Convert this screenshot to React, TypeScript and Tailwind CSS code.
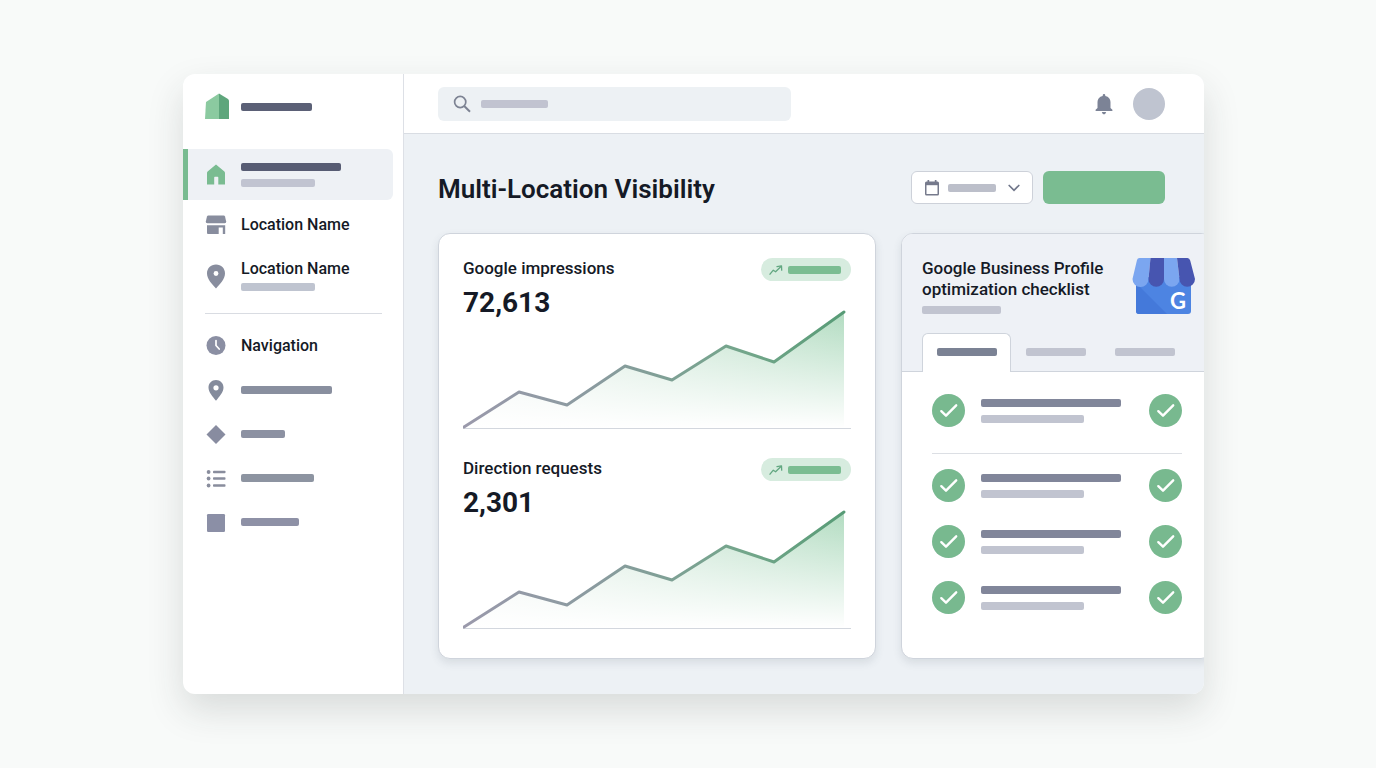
import { useState, type ReactNode } from "react";
import clsx from "clsx";

const CHART_LINE = "M1 117 L56 82 L104 95 L162 56 L209 70 L263 36 L311 52 L381 2";

function Bar({ className }: { className: string }) {
    return <span className={clsx("block h-2 rounded-[2px]", className)} />;
}

function LogoIcon() {
    return (
        <svg viewBox="0 0 24 28" className="w-6 h-7">
            <path d="M1 9 L14 0.5 V26 H0 Z" fill="#8bcaa0" />
            <path d="M14 0.5 L23 6 Q24 7 24 8 V26 H14 Z" fill="#5ea67c" />
        </svg>
    );
}

function HomeIcon() {
    return (
        <svg viewBox="0 0 24 24" className="w-6 h-6" fill="#7abc91">
            <path d="M12 1.5 L20.4 8.6 Q21 9.2 21 10 V21.5 H14.3 V14.5 Q14.3 13.8 13.6 13.8 H10.9 Q10.2 13.8 10.2 14.5 V21.5 H3 V10 Q3 9.2 3.6 8.6 Z" />
        </svg>
    );
}

function StoreIcon() {
    return (
        <svg viewBox="0 0 24 24" className="w-6 h-6" fill="#888d9e">
            <path d="M4.3 2.5 H19.7 Q20.7 2.5 21 3.5 L22.2 8.4 Q22.4 10.2 20.7 10.2 H3.3 Q1.6 10.2 1.8 8.4 L3 3.5 Q3.3 2.5 4.3 2.5 Z" />
            <path d="M3 12.3 H21.2 V21 H18.8 V14.4 H14.7 V21 H4 Q3 21 3 20 Z" />
        </svg>
    );
}

function PinLargeIcon() {
    return (
        <svg viewBox="0 0 24 28" className="w-6 h-7">
            <path d="M12 3.500 C6.800 3.500 3 7.300 3 12.500 C3 18 8 23 12 27.500 C16 23 21 18 21 12.500 C21 7.300 17.200 3.500 12 3.500 Z" fill="#888d9e" />
            <circle cx="12" cy="12.500" r="2.400" fill="#fff" />
        </svg>
    );
}

function ClockIcon() {
    return (
        <svg viewBox="0 0 24 24" className="w-6 h-6">
            <circle cx="12" cy="11.500" r="9.500" fill="#8b8fa3" />
            <path d="M12 6.500 V11.500 L15.200 15" fill="none" stroke="#fff" strokeWidth="1.700" strokeLinecap="round" />
        </svg>
    );
}

function PinIcon() {
    return (
        <svg viewBox="0 0 24 24" className="w-6 h-6">
            <path d="M12 2 C7.700 2 4.500 5.200 4.500 9.500 C4.500 14.200 8.700 18.500 12 22.800 C15.300 18.500 19.500 14.200 19.500 9.500 C19.500 5.200 16.300 2 12 2 Z" fill="#848b9c" />
            <circle cx="12" cy="9.800" r="2.600" fill="#fff" />
        </svg>
    );
}

function DiamondIcon() {
    return (
        <svg viewBox="0 0 24 24" className="w-6 h-6">
            <path d="M12 3 L21.500 12.500 L12 22 L2.500 12.500 Z" fill="#888ca0" />
        </svg>
    );
}

function ListIcon() {
    return (
        <svg viewBox="0 0 24 24" className="w-6 h-6" fill="#898d9d">
            {[6, 12.5, 19.5].map(y => (
                <g key={y}>
                    <circle cx="4.600" cy={y} r="1.900" />
                    <rect x="9" y={y - 1.3} width="12.500" height="2.600" rx="0.800" />
                </g>
            ))}
        </svg>
    );
}

function SquareIcon() {
    return (
        <svg viewBox="0 0 24 24" className="w-6 h-6">
            <rect x="3" y="4" width="18" height="18" rx="1.300" fill="#8b8fa6" />
        </svg>
    );
}

function SearchIcon() {
    return (
        <svg viewBox="0 0 18 18" className="w-[18px] h-[18px]" fill="none" stroke="#7d8393" strokeWidth="1.700">
            <circle cx="7.200" cy="7" r="5.600" />
            <path d="M11.200 11 L17 16.700" strokeWidth="2" />
        </svg>
    );
}

function BellIcon() {
    return (
        <svg viewBox="0 0 18 22" className="w-[18px] h-[22px]" fill="#7c8396">
            <path d="M9 1 Q10.300 1 10.300 2.400 V2.900 C13.800 3.600 15.500 6 15.500 9 V15 L17.400 16.800 V18 H0.600 V16.800 L2.500 15 V9 C2.500 6 4.200 3.600 7.700 2.900 V2.400 Q7.700 1 9 1 Z" />
            <path d="M6.800 19 H11.200 Q10.600 21.400 9 21.400 Q7.400 21.400 6.800 19 Z" />
        </svg>
    );
}

function CalendarIcon() {
    return (
        <svg viewBox="0 0 16 18" className="w-4 h-[18px]">
            <path d="M3.500 1 H5.200 V2.500 H10.800 V1 H12.500 V2.500 H13.500 Q15 2.500 15 4 V15 Q15 16.500 13.500 16.500 H2.500 Q1 16.500 1 15 V4 Q1 2.500 2.500 2.500 H3.500 Z" fill="#767a8c" />
            <rect x="2.500" y="6.200" width="11" height="8.800" fill="#fff" />
        </svg>
    );
}

function ChevronIcon() {
    return (
        <svg viewBox="0 0 12 8" className="w-3 h-2" fill="none" stroke="#70768a" strokeWidth="1.700" strokeLinecap="round">
            <path d="M1.200 1.500 L6 6.400 L10.800 1.500" />
        </svg>
    );
}

function TrendIcon() {
    return (
        <svg viewBox="0 0 14 12" className="w-3.5 h-3" fill="none" stroke="#62a781" strokeWidth="1.300" strokeLinecap="round" strokeLinejoin="round">
            <path d="M1 10.200 L4.300 6.200 L6.600 7.800 L12 2.500" />
            <path d="M8 2.600 L12.500 1.800 L12.700 6.200" />
        </svg>
    );
}

function CheckIcon({ className }: { className?: string }) {
    return (
        <svg viewBox="0 0 33 33" className={clsx("w-[33px] h-[33px]", className)}>
            <circle cx="16.500" cy="16.500" r="16.500" fill="#78b98f" />
            <path d="M9.300 17.200 L14 21.700 L24.200 11.300" fill="none" stroke="#fff" strokeWidth="2.400" strokeLinecap="round" strokeLinejoin="round" />
        </svg>
    );
}

function StorefrontLogo() {
    return (
        <svg viewBox="0 1 64 58" className="w-16 h-[58px] shrink-0">
            <path d="M4 20 H59 V54 Q59 57 56 57 H7 Q4 57 4 54 Z" fill="#4d84e2" />
            <path d="M4 26 L35 57 H7 Q4 57 4 54 Z" fill="#4479da" />
            <path d="M7.500 1 Q5.500 1 5 3 L0.500 22 A8 8 0 0 0 16.500 22 L18.500 1 Z" fill="#7ba6f0" />
            <path d="M18.500 1 H32 V22 A7.750 7.750 0 0 1 16.500 22 Z" fill="#4755b0" />
            <path d="M32 1 H45 L47.500 22 A7.750 7.750 0 0 1 32 22 Z" fill="#7ba6f0" />
            <path d="M45 1 H55.500 Q57.500 1 58.200 3.500 L63 22 A7.750 7.750 0 0 1 47.500 22 Z" fill="#4755b0" />
            <text x="46" y="51.500" textAnchor="middle" fill="#fff" fontSize="22" fontWeight="700" fontFamily="Lato, sans-serif">G</text>
        </svg>
    );
}

function NavItem({ icon, className, children }: { icon: ReactNode; className: string; children: ReactNode }) {
    return (
        <a href="#" className={clsx("flex items-center gap-[13px]", className)}>
            <span className="flex w-6 justify-center">{icon}</span>
            {children}
        </a>
    );
}

function Metric({ id, label, value }: { id: string; label: string; value: string }) {
    return (
        <section>
            <div className="flex items-start justify-between">
                <div>
                    <h2 className="text-[17px] leading-[21px] font-medium">{label}</h2>
                    <p className="mt-2 text-[28px] leading-8 font-bold">{value}</p>
                </div>
                <div className="flex h-[23px] items-center gap-[5px] rounded-full bg-[#d7ecdf] px-2">
                    <TrendIcon />
                    <Bar className="w-[53px] bg-[#7bbd92] mr-0.5" />
                </div>
            </div>
            <svg viewBox="0 0 388 120" className="block w-full -mt-[9px]">
                <defs>
                    <linearGradient id={`${id}-line`} x1="0" x2="1" y1="0" y2="0">
                        <stop offset="0" stopColor="#9a99ab" />
                        <stop offset="0.35" stopColor="#8a9b9f" />
                        <stop offset="0.75" stopColor="#72a68a" />
                        <stop offset="1" stopColor="#579b76" />
                    </linearGradient>
                    <linearGradient id={`${id}-down`} x1="0" x2="0" y1="0" y2="1">
                        <stop offset="0" stopColor="#fff" stopOpacity="0" />
                        <stop offset="1" stopColor="#fff" />
                    </linearGradient>
                    <linearGradient id={`${id}-across`} x1="0" x2="1" y1="0" y2="0">
                        <stop offset="0" stopColor="#f2f6f4" />
                        <stop offset="1" stopColor="#b2dcc1" />
                    </linearGradient>
                </defs>
                <path d={`${CHART_LINE} V118 H1 Z`} fill={`url(#${id}-across)`} />
                <path d={`${CHART_LINE} V118 H1 Z`} fill={`url(#${id}-down)`} />
                <path d="M0 118.500 H388" stroke="#d3d7de" strokeWidth="1.200" />
                <path d={CHART_LINE} fill="none" stroke={`url(#${id}-line)`} strokeWidth="3" strokeLinecap="round" strokeLinejoin="round" />
            </svg>
        </section>
    );
}

function ChecklistItem({ index }: { index: number }) {
    return (
        <li className="flex items-center justify-between">
            <label className="flex items-center gap-4">
                <span className="grid rounded-full bg-slate-200">
                    <input
                        type="checkbox"
                        defaultChecked
                        aria-label={`Checklist item ${index}`}
                        className="peer col-start-1 row-start-1 appearance-none rounded-full"
                    />
                    <CheckIcon className="col-start-1 row-start-1 opacity-0 peer-checked:opacity-100" />
                </span>
                <span className="flex flex-col gap-2">
                    <Bar className="w-[140px] bg-[#81869a]" />
                    <Bar className="w-[103px] bg-[#c1c4d0]" />
                </span>
            </label>
            <CheckIcon />
        </li>
    );
}

export default function App() {
    const [tab, setTab] = useState(0);

    return (
        <div className="min-h-screen bg-[#f8faf9] pt-[74px] pb-[74px] pl-[183px] pr-[172px] font-[Roboto,sans-serif] text-[#151a26]">
            <div className="flex overflow-hidden rounded-xl bg-white shadow-[0_16px_36px_rgba(40,44,50,0.15)]">
                <aside className="w-[221px] shrink-0 border-r border-[#dde0e6]">
                    <a href="#" aria-label="Dashboard" className="flex h-[75px] items-center gap-3 pl-[22px] pb-2.5">
                        <LogoIcon />
                        <Bar className="w-[71px] bg-[#5b6076]" />
                    </a>
                    <nav aria-label="Main">
                        <NavItem icon={<HomeIcon />} className="h-[51px] mr-2.5 rounded-r-md border-l-[5px] border-[#78bb90] bg-[#eef1f5] pl-4">
                            <span className="flex flex-col gap-2">
                                <Bar className="w-[100px] bg-[#575c73]" />
                                <Bar className="w-[74px] bg-[#c1c4d1]" />
                            </span>
                        </NavItem>
                        <NavItem icon={<StoreIcon />} className="h-[50px] pl-[21px]">
                            <span className="text-base leading-5 font-medium">Location Name</span>
                        </NavItem>
                        <NavItem icon={<PinLargeIcon />} className="h-[50px] pl-[21px]">
                            <span className="flex flex-col gap-1">
                                <span className="text-base leading-5 font-medium">Location Name</span>
                                <Bar className="w-[74px] bg-[#bfc4d0]" />
                            </span>
                        </NavItem>
                        <hr className="mt-[13px] mb-2.5 ml-[22px] mr-[21px] border-[#d9dce2]" />
                        <NavItem icon={<ClockIcon />} className="h-11 pl-[21px]">
                            <span className="text-base leading-5 font-medium">Navigation</span>
                        </NavItem>
                        <NavItem icon={<PinIcon />} className="h-11 pl-[21px]">
                            <Bar className="w-[91px] bg-[#898f9f]" />
                        </NavItem>
                        <NavItem icon={<DiamondIcon />} className="h-11 pl-[21px]">
                            <Bar className="w-[44px] bg-[#8c91a2]" />
                        </NavItem>
                        <NavItem icon={<ListIcon />} className="h-11 pl-[21px]">
                            <Bar className="w-[73px] bg-[#8d94a1]" />
                        </NavItem>
                        <NavItem icon={<SquareIcon />} className="h-11 pl-[21px]">
                            <Bar className="w-[58px] bg-[#8e91a6]" />
                        </NavItem>
                    </nav>
                </aside>

                <div className="min-w-0 flex-1 bg-[#edf1f5]">
                    <header className="flex h-[60px] items-center border-b border-[#d9dde3] bg-white pl-[34px] pr-[39px]">
                        <label className="flex h-[34px] w-[353px] items-center gap-2.5 rounded-md bg-[#edf1f4] px-[15px]">
                            <SearchIcon />
                            <Bar className="w-[67px] shrink-0 bg-[#c1c3d0]" />
                            <input type="search" aria-label="Search" className="min-w-0 flex-1 bg-transparent text-sm outline-none" />
                        </label>
                        <div className="ml-auto flex items-center gap-5">
                            <button type="button" aria-label="Notifications">
                                <BellIcon />
                            </button>
                            <button type="button" aria-label="Account" className="size-8 rounded-full bg-[#bfc4d0]" />
                        </div>
                    </header>

                    <main className="overflow-hidden pt-[37px] pb-[35px] pl-[34px] pr-[39px]">
                        <div className="flex items-end justify-between">
                            <h1 className="text-[26px] leading-[30px] font-semibold">Multi-Location Visibility</h1>
                            <div className="flex gap-2.5">
                                <button type="button" aria-label="Date range" aria-haspopup="listbox" className="flex h-[33px] w-[122px] items-center gap-2 rounded-md border border-[#cdd1d9] bg-white px-3">
                                    <CalendarIcon />
                                    <Bar className="w-12 bg-[#bcbfca]" />
                                    <span className="ml-auto">
                                        <ChevronIcon />
                                    </span>
                                </button>
                                <button type="button" aria-label="Create" className="h-[33px] w-[122px] rounded-md bg-[#7abc91]" />
                            </div>
                        </div>

                        <div className="mt-[29px] flex gap-[25px]">
                            <div className="flex min-w-0 flex-1 flex-col gap-7 rounded-xl border border-[#cfd4dc] bg-white px-6 pt-6 pb-7 shadow-[0_4px_8px_rgba(60,70,90,0.12)]">
                                <Metric id="impressions" label="Google impressions" value="72,613" />
                                <Metric id="directions" label="Direction requests" value="2,301" />
                            </div>

                            <div className="-mr-12 w-[312px] shrink-0 overflow-hidden rounded-xl border border-[#cfd4dc] bg-white shadow-[0_4px_8px_rgba(60,70,90,0.12)]">
                                <div className="border-b border-[#cfd4dc] bg-[#eef1f6] pt-6 pl-5 pr-4">
                                    <div className="flex h-[75px] items-start justify-between">
                                        <div>
                                            <h2 className="text-[17px] leading-[21px] font-medium">
                                                Google Business Profile
                                                <br />
                                                optimization checklist
                                            </h2>
                                            <Bar className="mt-1.5 w-[79px] bg-[#c1c4d0]" />
                                        </div>
                                        <StorefrontLogo />
                                    </div>
                                    <div role="tablist" aria-label="Checklist sections" className="-mb-px flex">
                                        {[0, 1, 2].map(i => (
                                            <button
                                                key={i}
                                                type="button"
                                                role="tab"
                                                aria-label={`Section ${i + 1}`}
                                                aria-selected={tab === i}
                                                onClick={() => setTab(i)}
                                                className={clsx(
                                                    "flex h-[39px] w-[89px] items-center justify-center rounded-t-md border border-b-0 pb-0.5",
                                                    tab === i ? "border-[#cfd4dc] bg-white" : "border-transparent"
                                                )}
                                            >
                                                <Bar className={clsx("w-[60px]", tab === i ? "bg-[#7b8294]" : "bg-[#c1c4d0]")} />
                                            </button>
                                        ))}
                                    </div>
                                </div>
                                <div className="px-[30px] pt-[22px]">
                                    <ul className="border-b border-[#dcdfe4] pb-[26px]">
                                        <ChecklistItem index={1} />
                                    </ul>
                                    <ul className="flex flex-col gap-[23px] pt-[15px]">
                                        <ChecklistItem index={2} />
                                        <ChecklistItem index={3} />
                                        <ChecklistItem index={4} />
                                    </ul>
                                </div>
                            </div>
                        </div>
                    </main>
                </div>
            </div>
        </div>
    );
}
